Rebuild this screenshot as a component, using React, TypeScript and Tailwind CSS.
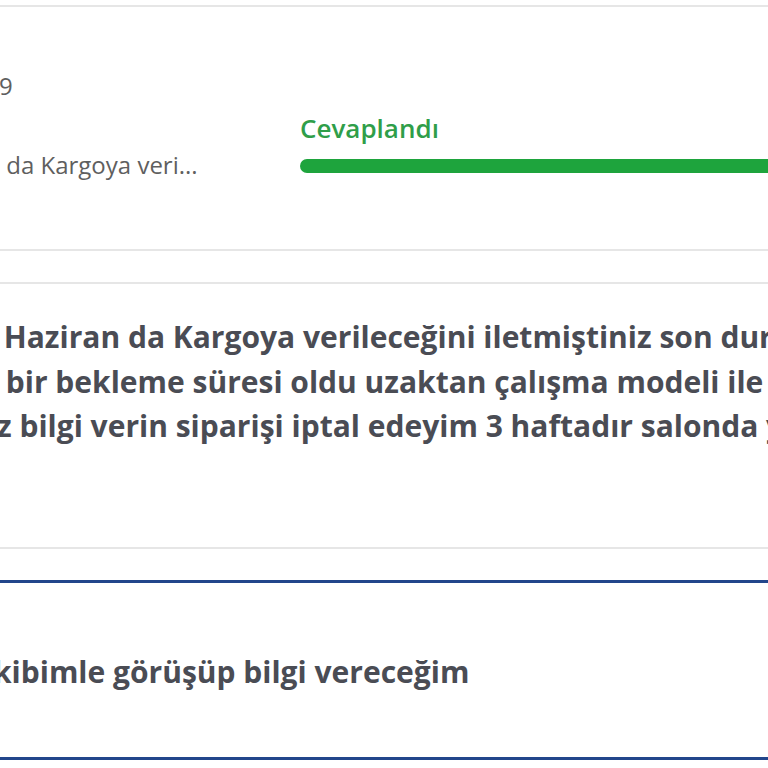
import React from "react";

const bodyLines = [
  { text: " Haziran da Kargoya verileceğini iletmiştiniz son dur", offset: "ml-[-4px]" },
  { text: " bir bekleme süresi oldu uzaktan çalışma modeli ile", offset: "ml-[-2px]" },
  { text: "z bilgi verin siparişi iptal edeyim 3 haftadır salonda y", offset: "ml-[-3px]" },
];

export default function App() {
  return (
    <div className="w-[768px] h-[768px] overflow-hidden bg-white font-['Open_Sans',sans-serif]">
      <div className="flex flex-col gap-[31px] pt-[5px]">
        {/* summary row */}
        <div className="h-[246px] border-y-2 border-[#e6e6e6] flex">
          <div className="w-[300px] shrink-0 flex flex-col text-[24px] leading-[34px] text-[#5f5f5f] whitespace-nowrap">
            <div className="mt-[62px] ml-[-1px]">9</div>
            <div className="mt-[45px]">{"\u00a0"}da Kargoya veri...</div>
          </div>
          <div className="flex-1 min-w-0 flex flex-col">
            <div className="mt-[104px] text-[26px] leading-[34px] font-semibold text-[#2f9e49]">
              Cevaplandı
            </div>
            <div className="mt-[14px] h-[14px] w-[700px] rounded-full bg-[#1ea43d]" />
          </div>
        </div>

        {/* customer message */}
        <div className="h-[267px] border-y-2 border-[#e6e6e6] pt-[31px]">
          <div className="text-[30px] leading-[44.5px] font-bold text-[#4a4c54] whitespace-pre">
            {bodyLines.map((l) => (
              <div key={l.text} className={l.offset}>
                {l.text}
              </div>
            ))}
          </div>
        </div>

        {/* reply */}
        <div className="h-[180px] border-y-[3px] border-[#22468b] flex items-center pt-[4px]">
          <div className="ml-[-7px] text-[30px] leading-[44px] font-bold text-[#4a4c54] whitespace-nowrap">
            kibimle görüşüp bilgi vereceğim
          </div>
        </div>
      </div>
    </div>
  );
}
